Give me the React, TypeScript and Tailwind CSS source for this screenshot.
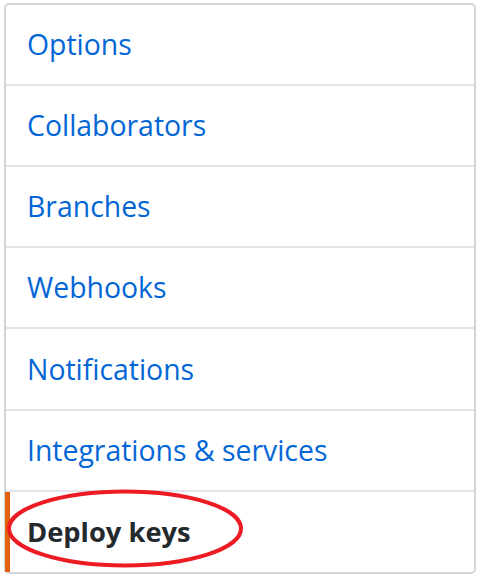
const items = [
  "Options",
  "Collaborators",
  "Branches",
  "Webhooks",
  "Notifications",
  "Integrations & services",
];

export default function App() {
  return (
    <div className="w-[481px] h-[577px] bg-white pt-[3px] pl-[4px] font-['Open_Sans',sans-serif]">
      <div className="w-[472px] h-[571px] border-2 border-[#d1d5da] rounded-[5px] flex flex-col">
        {items.map((label, i) => (
          <a
            key={label}
            href="#"
            className={`shrink-0 flex items-center pl-[21px] text-[28.4px] text-[#0366d6] ${
              i === 0 ? "h-[79px]" : i === 4 ? "h-[82px] border-t-2 border-[#e1e4e8]" : "h-[81px] border-t-2 border-[#e1e4e8]"
            }`}
          >
            {label}
          </a>
        ))}
        <div className="relative flex-1 flex items-center border-t-2 border-[#e1e4e8] pl-[21px] text-[27.3px] font-bold text-[#24292e]">
          <span className="absolute left-[-1px] top-0 bottom-0 w-[5px] bg-[#e36209]" />
          Deploy keys
          <svg className="absolute left-0 top-[-4px] overflow-visible" width="250" height="84" viewBox="0 0 250 84">
            <ellipse cx="119" cy="40.5" rx="116" ry="37" fill="none" stroke="#ed1c24" strokeWidth="4" />
          </svg>
        </div>
      </div>
    </div>
  );
}
